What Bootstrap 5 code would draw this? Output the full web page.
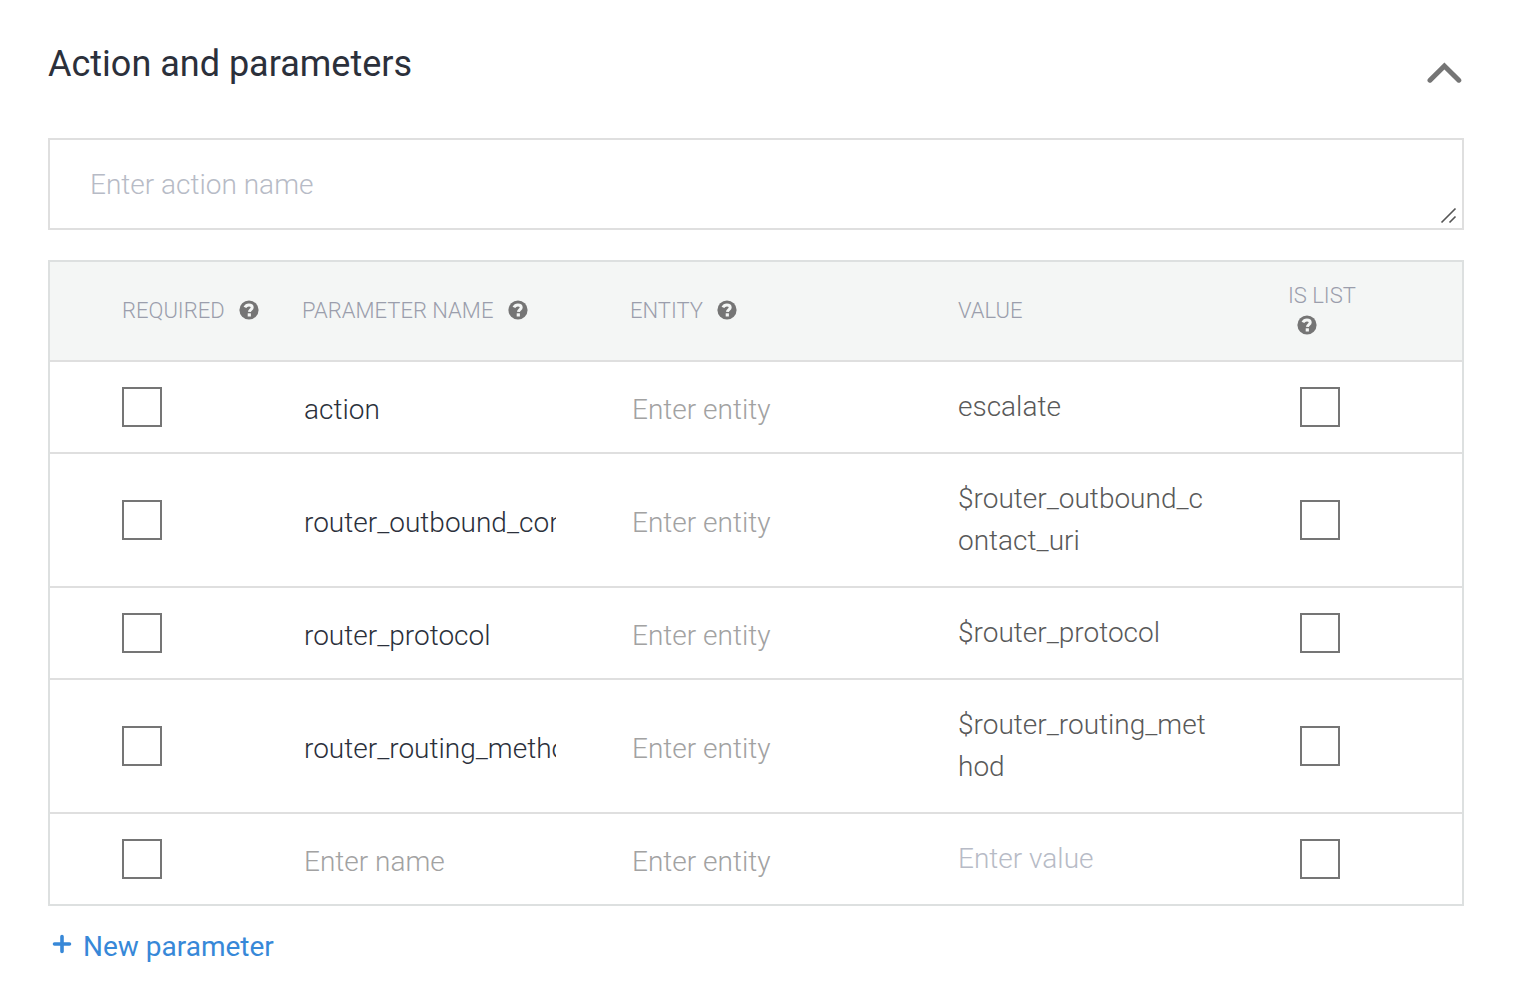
<!DOCTYPE html>
<html lang="en">
<head>
<meta charset="utf-8">
<meta name="viewport" content="width=device-width, initial-scale=1">
<title>Action and parameters</title>
<link href="https://cdn.jsdelivr.net/npm/bootstrap@5.3.0/dist/css/bootstrap.min.css" rel="stylesheet">
<style>
  body { font-family: Roboto, "Liberation Sans", sans-serif; font-size: 28px; line-height: 42px; font-weight: 300; color: #2b303b; background: #fff; }
  .panel-page { padding: 40px 50px 24px 48px; }
  .panel-title { font-size: 36px; line-height: 48px; font-weight: 400; }
  .panel-head { margin-bottom: 50px; }
  .toggle-btn { margin-top: 20px; margin-right: 2px; line-height: 0; }
  .action-box { margin-bottom: 30px; }
  .action-input { display: block; height: 92px; padding: 24px 40px 22px; border: 2px solid #dfdfdf; font-size: 28px; line-height: 42px; font-weight: 300; resize: none; overflow: hidden; }
  .action-input::placeholder, .value-input::placeholder { color: #b7bbc6; opacity: 1; }
  .grip { right: 6px; bottom: 6px; pointer-events: none; }
  .param-frame { border: 2px solid #dde0e0; }
  .param-table { table-layout: fixed; border-collapse: separate; border-spacing: 0; width: 100%; }
  .param-table th { height: 98px; padding: 0; background: #f4f6f5; color: #9b9eac; font-size: 22px; line-height: 30px; font-weight: 300; text-transform: uppercase; vertical-align: middle; }
  .param-table td { padding: 24px 72px 24px 0; border-top: 2px solid #dfdfdf; vertical-align: middle; line-height: 0; }
  .param-table .col-first { padding-left: 72px; padding-right: 0; }
  .param-table td.col-list { padding-left: 12px; padding-right: 0; }
  .param-table th.col-list { padding-right: 76px; }
  .w-first { width: 252px; }
  .w-field { width: 328px; }
  .w-list { width: 174px; }
  .help-btn { height: 20px; margin-left: 9px; padding: 0; border: 0; background: none; line-height: 0; vertical-align: -2px; }
  .help-btn svg { display: block; }
  .cell-input { width: 100%; height: 41px; padding: 4px 2px 0; border: 0; background: none; color: #2b303b; font-size: 28px; line-height: 38px; font-weight: 300; }
  .cell-input::placeholder { color: #a2a2a2; opacity: 1; }
  .value-input { display: block; width: 100%; padding: 0; border: 0; background: none; color: #595959; font-size: 28px; line-height: 42px; font-weight: 300; resize: none; overflow: hidden; word-break: break-all; }
  .param-table .form-check-input { width: 40px; height: 40px; margin: 0 0 1px; border: 2px solid #757575; border-radius: 0; background-color: #fff; }
  .add-btn { margin-top: 20px; padding: 0 4px; color: #3788d8; font-size: 28px; line-height: 42px; font-weight: 400; gap: 11px; }
  .add-btn svg { margin-bottom: 6px; }
</style>
</head>
<body>
<svg class="d-none" aria-hidden="true">
  <symbol id="help" viewBox="0 0 20 20">
    <circle cx="10" cy="10" r="9.6" fill="#757575"/>
    <path d="M5.900 7.400Q7.100 4.900 9.900 4.900c2.300 0 3.300 1.200 3.300 2.500 0 2.200-2.700 2.200-2.800 4.500" fill="none" stroke="#f4f6f5" stroke-width="3"/>
    <path d="M8.700 13.300h3.200v3.200H8.700z" fill="#f4f6f5"/>
  </symbol>
</svg>
<main class="panel-page">
  <header class="panel-head d-flex justify-content-between align-items-start">
    <h1 class="panel-title m-0">Action and parameters</h1>
    <button type="button" class="toggle-btn btn border-0 p-0" aria-label="Collapse section">
      <svg width="36" height="24" viewBox="0 0 36 24"><path d="M4 20.200 18.400 6l14.400 14.200" fill="none" stroke="#757575" stroke-width="5" stroke-linecap="round"/></svg>
    </button>
  </header>

  <div class="action-box position-relative">
    <textarea class="action-input form-control rounded-0" rows="1" placeholder="Enter action name" aria-label="Action name"></textarea>
    <svg class="grip position-absolute" width="18" height="18" viewBox="0 0 18 18"><path d="M1.500 16.500 15.500 2.500M9.500 16.500l6-6" stroke="#555" stroke-width="1.600" fill="none"/></svg>
  </div>

  <div class="param-frame">
    <table class="param-table">
      <colgroup><col class="w-first"><col class="w-field"><col class="w-field"><col><col class="w-list"></colgroup>
      <thead>
        <tr>
          <th scope="col" class="col-first">Required <button type="button" class="help-btn" aria-label="Help"><svg width="20" height="20"><use href="#help"/></svg></button></th>
          <th scope="col">Parameter name <button type="button" class="help-btn" aria-label="Help"><svg width="20" height="20"><use href="#help"/></svg></button></th>
          <th scope="col">Entity <button type="button" class="help-btn" aria-label="Help"><svg width="20" height="20"><use href="#help"/></svg></button></th>
          <th scope="col">Value</th>
          <th scope="col" class="col-list">Is list <button type="button" class="help-btn" aria-label="Help"><svg width="20" height="20"><use href="#help"/></svg></button></th>
        </tr>
      </thead>
      <tbody>
        <tr>
          <td class="col-first"><input type="checkbox" class="form-check-input" aria-label="Required"></td>
          <td><input type="text" class="cell-input" value="action" placeholder="Enter name" aria-label="Parameter name"></td>
          <td><input type="text" class="cell-input" placeholder="Enter entity" aria-label="Entity"></td>
          <td><textarea class="value-input" rows="1" placeholder="Enter value" aria-label="Value">escalate</textarea></td>
          <td class="col-list"><input type="checkbox" class="form-check-input" aria-label="Is list"></td>
        </tr>
        <tr>
          <td class="col-first"><input type="checkbox" class="form-check-input" aria-label="Required"></td>
          <td><input type="text" class="cell-input" value="router_outbound_contact_uri" placeholder="Enter name" aria-label="Parameter name"></td>
          <td><input type="text" class="cell-input" placeholder="Enter entity" aria-label="Entity"></td>
          <td><textarea class="value-input" rows="2" placeholder="Enter value" aria-label="Value">$router_outbound_contact_uri</textarea></td>
          <td class="col-list"><input type="checkbox" class="form-check-input" aria-label="Is list"></td>
        </tr>
        <tr>
          <td class="col-first"><input type="checkbox" class="form-check-input" aria-label="Required"></td>
          <td><input type="text" class="cell-input" value="router_protocol" placeholder="Enter name" aria-label="Parameter name"></td>
          <td><input type="text" class="cell-input" placeholder="Enter entity" aria-label="Entity"></td>
          <td><textarea class="value-input" rows="1" placeholder="Enter value" aria-label="Value">$router_protocol</textarea></td>
          <td class="col-list"><input type="checkbox" class="form-check-input" aria-label="Is list"></td>
        </tr>
        <tr>
          <td class="col-first"><input type="checkbox" class="form-check-input" aria-label="Required"></td>
          <td><input type="text" class="cell-input" value="router_routing_method" placeholder="Enter name" aria-label="Parameter name"></td>
          <td><input type="text" class="cell-input" placeholder="Enter entity" aria-label="Entity"></td>
          <td><textarea class="value-input" rows="2" placeholder="Enter value" aria-label="Value">$router_routing_method</textarea></td>
          <td class="col-list"><input type="checkbox" class="form-check-input" aria-label="Is list"></td>
        </tr>
        <tr>
          <td class="col-first"><input type="checkbox" class="form-check-input" aria-label="Required"></td>
          <td><input type="text" class="cell-input" placeholder="Enter name" aria-label="Parameter name"></td>
          <td><input type="text" class="cell-input" placeholder="Enter entity" aria-label="Entity"></td>
          <td><textarea class="value-input" rows="1" placeholder="Enter value" aria-label="Value"></textarea></td>
          <td class="col-list"><input type="checkbox" class="form-check-input" aria-label="Is list"></td>
        </tr>
      </tbody>
    </table>
  </div>

  <button type="button" class="add-btn btn border-0 rounded-0 d-inline-flex align-items-center">
    <svg width="20" height="20" viewBox="0 0 20 20" aria-hidden="true"><path d="M2.500 10h15M10 2.500v15" stroke="#3788d8" stroke-width="3.600" stroke-linecap="round"/></svg>
    <span>New parameter</span>
  </button>
</main>
<script src="https://cdn.jsdelivr.net/npm/bootstrap@5.3.0/dist/js/bootstrap.bundle.min.js"></script>
</body>
</html>
